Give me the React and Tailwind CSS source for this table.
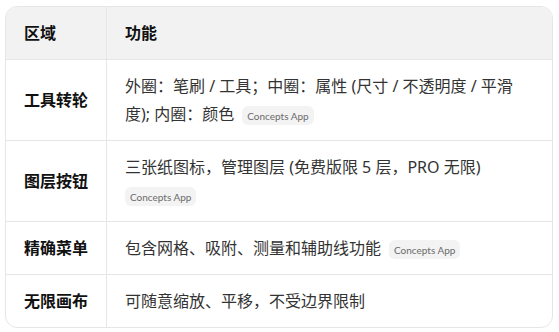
import React from "react";

const Badge = () => (
  <span
    className="ml-2 inline-flex items-center rounded-md bg-[#f3f3f3] px-[5px] h-[19px] align-middle text-[10px] leading-none text-[#6b6b6b]"
    style={{ fontFamily: 'Lato, "Noto Sans", sans-serif' }}
  >
    Concepts App
  </span>
);

const rows = [
  {
    label: "工具转轮",
    content: (
      <>
        外圈：笔刷 / 工具；中圈：属性 (尺寸 / 不透明度 / 平滑度); 内圈：颜色
        <Badge />
      </>
    ),
  },
  {
    label: "图层按钮",
    content: (
      <>
        三张纸图标，管理图层 (免费版限 5 层，PRO 无限)
        <br />
        <span className="-ml-2">
          <Badge />
        </span>
      </>
    ),
  },
  {
    label: "精确菜单",
    content: (
      <>
        包含网格、吸附、测量和辅助线功能
        <Badge />
      </>
    ),
  },
  { label: "无限画布", content: <>可随意缩放、平移，不受边界限制</> },
];

export default function App() {
  return (
    <div
      className="bg-white w-[559px] h-[332px] pt-[6px] pl-[5px]"
      style={{ fontFamily: '"Noto Sans", "Noto Sans CJK SC", sans-serif' }}
    >
      <div className="w-[548px] rounded-xl border border-[#e6e6e6] overflow-hidden">
        <div className="grid grid-cols-[101px_1fr] bg-[#f2f2f2] border-b border-[#e6e6e6]">
          <div className="px-[18px] py-3 text-[16px] leading-7 font-bold text-[#111] border-r border-[#e6e6e6]">
            区域
          </div>
          <div className="px-[18px] py-3 text-[16px] leading-7 font-bold text-[#111]">
            功能
          </div>
        </div>
        {rows.map((r, i) => (
          <div
            key={i}
            className={`grid grid-cols-[101px_1fr] ${i < rows.length - 1 ? "border-b border-[#e6e6e6]" : ""}`}
          >
            <div className="flex items-center px-[18px] py-3 text-[16px] leading-7 font-bold text-[#111] border-r border-[#e6e6e6]">
              {r.label}
            </div>
            <div className="px-[18px] py-3 text-[16px] leading-7 text-[#333]">
              {r.content}
            </div>
          </div>
        ))}
      </div>
    </div>
  );
}
